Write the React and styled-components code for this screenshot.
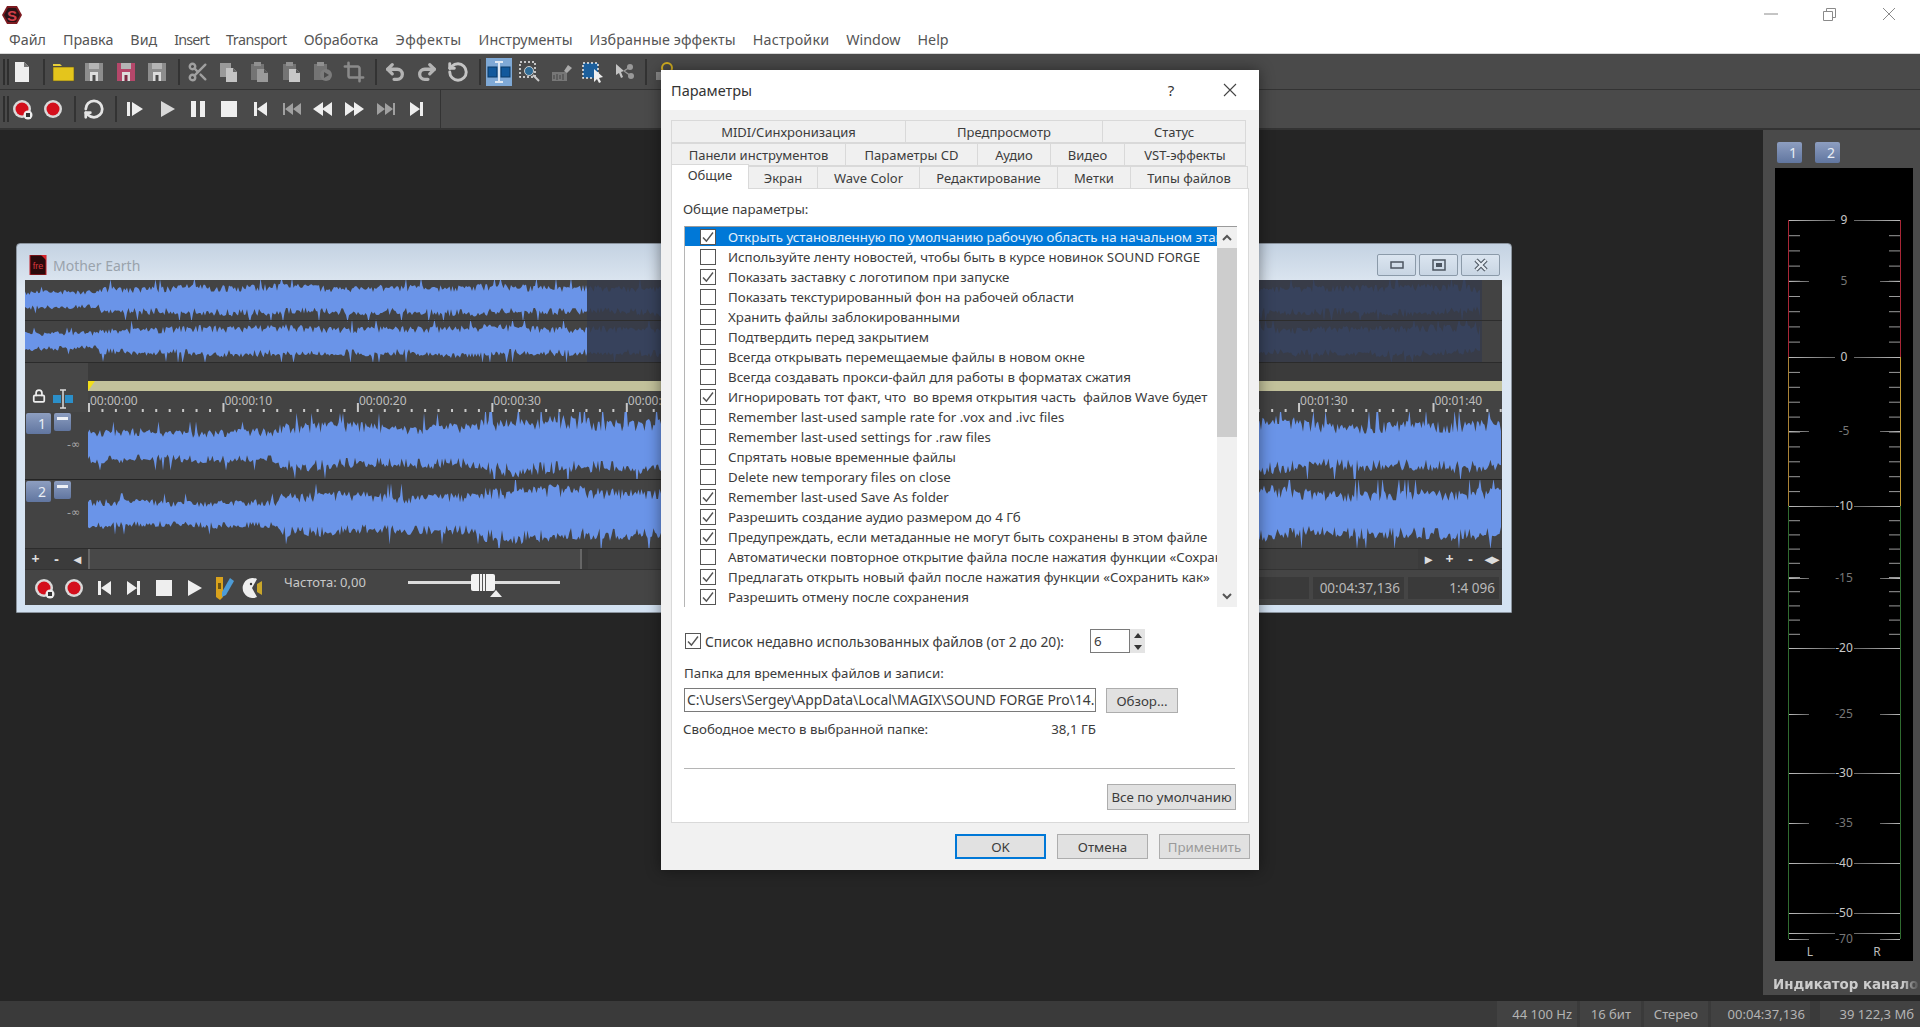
import React from 'react';
import styled, { createGlobalStyle } from 'styled-components';
import { Scissors, Crop, Undo2, Redo2, RotateCcw, Lock } from 'lucide-react';

const UI_FONT = '"Noto Sans", "Open Sans", Arial, sans-serif';

const GlobalStyle = createGlobalStyle`
  html, body {
    margin: 0;
    padding: 0;
    background: #252525;
    overflow: hidden;
  }
  * {
    box-sizing: border-box;
  }
`;

const Page = styled.div`
  position: relative;
  width: 1920px;
  height: 1027px;
  display: flex;
  flex-direction: column;
  overflow: hidden;
  font-family: ${UI_FONT};
`;

/* top chrome */

const TopStrip = styled.div`
  height: 54px;
  background: #fff;
  display: flex;
  flex-direction: column;
  border-bottom: 1px solid #d8d8d8;
`;

const TitleRow = styled.div`
  height: 28px;
  display: flex;
  justify-content: space-between;
  padding: 5px 2px 0 2px;
`;

const WinButtons = styled.div`
  display: flex;
`;

const WinButton = styled.div`
  width: 59px;
  height: 18px;
  display: flex;
  justify-content: center;
  align-items: center;
  color: #8a8a8a;
`;

const MenuBar = styled.div`
  display: flex;
  padding-left: 9px;
  gap: 17px;
`;

const MenuItem = styled.span`
  font-size: 14.3px;
  line-height: 24px;
  letter-spacing: ${p => p.$spacing}px;
  color: #555;
  white-space: nowrap;
`;

const Toolbars = styled.div`
  height: 76px;
  background: #4a4a4a;
  border-bottom: 2px solid #333;
`;

const ToolRow = styled.div`
  height: 36px;
  padding-left: 3px;
  display: flex;
  align-items: center;
  gap: 5.3px;
  border-bottom: 1px solid #333;
`;

const ToolRowShort = styled(ToolRow)`
  height: 38px;
  width: 441px;
  border-right: 1px solid #333;
  border-bottom: none;
`;

const Grip = styled.div`
  width: 6px;
  height: 26px;
  margin-right: -5.3px;
  border-left: 2px solid #2e2e2e;
  border-right: 2px solid #2e2e2e;
`;

const Slot = styled.div`
  width: 26px;
  height: 28px;
  flex: none;
  display: flex;
  align-items: center;
  justify-content: center;
  color: ${p => p.$color || '#eee'};
  background: ${p => (p.$active ? '#7fa9d6' : 'transparent')};
`;

const ToolSep = styled.div`
  width: 2px;
  height: 26px;
  margin-left: 2.4px;
  background: #333;
`;

/* main area */

const Main = styled.div`
  flex: 1;
  display: flex;
  min-height: 0;
`;

const Workspace = styled.div`
  flex: 1;
  position: relative;
  background: #252525;
`;

const SoundWindow = styled.div`
  position: absolute;
  left: 16px;
  top: 113px;
  width: 1496px;
  height: 370px;
  padding: 0 9px 7px 8px;
  border: 1px solid #8b949e;
  border-radius: 4px 4px 0 0;
  background: linear-gradient(180deg, #c4d2e2 0%, #dfe8f2 12%, #d3e2f2 100%);
  display: flex;
  flex-direction: column;
`;

const SoundTitle = styled.div`
  height: 36px;
  display: flex;
  align-items: center;
  padding: 6px 2px 0 4px;
  gap: 3px;
`;

const SoundName = styled.span`
  margin-left: 3px;
  font-size: 14px;
  color: #9aa3ac;
  flex: 1;
`;

const FrameButton = styled.div`
  width: 39px;
  height: 22px;
  border: 1px solid #8b9aa9;
  border-radius: 2px;
  background: linear-gradient(180deg, #dbe5f0, #c8d5e3);
  display: flex;
  align-items: center;
  justify-content: center;
  color: #4c5560;
`;

const SoundInner = styled.div`
  flex: 1;
  display: flex;
  flex-direction: column;
  background: #434343;
`;

const Overview = styled.svg`
  display: block;
  flex: none;
  border-bottom: 1px solid #2b2b2b;
`;

const TimelineRow = styled.div`
  height: 49px;
  display: flex;
`;

const TimelineHead = styled.div`
  width: 63px;
  flex: none;
  background: #474747;
  padding: 26px 0 0 7px;
  display: flex;
  align-items: flex-start;
  gap: 6px;
  color: #eee;
`;

const TimelineBody = styled.div`
  flex: 1;
  display: flex;
  flex-direction: column;
`;

const TopGap = styled.div`
  height: 18px;
  background: #3b3b3b;
`;

const LoopBar = styled.div`
  position: relative;
  height: 10px;
  background: #c2c19b;
`;

const LoopFlag = styled.div`
  position: absolute;
  left: 0;
  top: 0;
  border-top: 10px solid #f2de1c;
  border-right: 7px solid transparent;
`;

const TrackRow = styled.div`
  height: ${p => p.$h}px;
  display: flex;
  background: #434343;
  border-top: ${p => (p.$line ? '1px solid #242424' : 'none')};
`;

const TrackHead = styled.div`
  width: 63px;
  flex: none;
  display: flex;
  flex-direction: column;
  padding: 1px 0 0 1px;
`;

const TrackButtons = styled.div`
  display: flex;
  gap: 3px;
`;

const ChannelButton = styled.div`
  width: 25px;
  height: 21px;
  border-radius: 2px;
  background: linear-gradient(180deg, #8d9ec0, #6176a0);
  color: #e8edf5;
  font-size: 14px;
  display: flex;
  align-items: center;
  justify-content: flex-end;
  padding-right: 5px;
`;

const MinusButton = styled(ChannelButton)`
  width: 17px;
  height: 18px;
  padding: 4px 0 0;
  justify-content: center;
  align-items: flex-start;
`;

const MinusBar = styled.div`
  width: 11px;
  height: 3px;
  background: #eef1f6;
`;

const DbLabel = styled.div`
  margin: 4px 0 0 41px;
  font-family: "DejaVu Sans", sans-serif;
  font-size: 11px;
  line-height: 14px;
  color: #aaa;
`;

const ScrollRow = styled.div`
  height: 21px;
  display: flex;
  align-items: center;
  background: #3b3b3b;
  border-top: 1px solid #2c2c2c;
  color: #ddd;
`;

const ScrollButton = styled.div`
  width: 21px;
  height: 20px;
  flex: none;
  display: flex;
  align-items: center;
  justify-content: center;
  font-size: 14px;
  font-weight: 700;
  line-height: 1;
`;

const ScrollThumb = styled.div`
  width: 494px;
  height: 20px;
  flex: none;
  margin-right: 6px;
  background: #484848;
  border-left: 2px solid #666;
  border-right: 2px solid #666;
`;

const ScrollTrack = styled.div`
  flex: 1;
  height: 20px;
  background: #3f3f3f;
`;

const TransportRow = styled.div`
  flex: 1;
  display: flex;
  align-items: center;
  gap: 4px;
  padding-left: 6px;
  padding-right: 3px;
  background: #454545;
  border-top: 1px solid #333;
`;

const RateLabel = styled.div`
  margin: -11px 0 0 13px;
  width: 120px;
  font-size: 13px;
  color: #c8c8c8;
  white-space: nowrap;
`;

const Slider = styled.div`
  position: relative;
  width: 152px;
  height: 3px;
  margin-top: -10px;
  background: #dcdcdc;
`;

const SliderThumb = styled.div`
  position: absolute;
  left: 63px;
  top: -7px;
  width: 24px;
  height: 17px;
  border-radius: 2px;
  background: linear-gradient(
    90deg,
    #f3f3f3 8px,
    #555 8px 9px,
    #f3f3f3 9px 11px,
    #555 11px 12px,
    #f3f3f3 12px 14px,
    #555 14px 15px,
    #f3f3f3 15px
  );
`;

const SliderMark = styled.div`
  position: absolute;
  left: 82px;
  top: 9px;
  border-left: 6px solid transparent;
  border-right: 6px solid transparent;
  border-bottom: 7px solid #eee;
`;

const Spacer = styled.div`
  flex: 1;
`;

const ReadoutCell = styled.div`
  width: ${p => p.$w}px;
  height: 22px;
  padding: 0 4px;
  background: #3a3a3a;
  font-size: 13.5px;
  line-height: 22px;
  color: #b8b8b8;
  text-align: right;
  white-space: nowrap;
`;

/* level meter */

const MeterPanel = styled.div`
  width: 157px;
  flex: none;
  margin-bottom: 6px;
  background: #4a4a4a;
  padding: 12px 0 0 12px;
  display: flex;
  flex-direction: column;
  overflow: hidden;
`;

const MeterButtons = styled.div`
  display: flex;
  gap: 13px;
  padding-left: 2px;
  margin-bottom: 5px;
`;

const MeterSvg = styled.svg`
  display: block;
  background: #000;
`;

const MeterTitle = styled.div`
  margin: 16px 0 0 -2px;
  font-family: "DejaVu Sans", sans-serif;
  font-size: 13.4px;
  font-weight: 700;
  color: #ccc;
  white-space: nowrap;
  mask-image: linear-gradient(90deg, #000 88%, transparent 100%);
`;

const StatusBar = styled.div`
  height: 26px;
  background: #3a3a3a;
  display: flex;
  justify-content: flex-end;
  gap: 3px;
`;

const StatusCell = styled.div`
  width: ${p => p.$w}px;
  margin-left: ${p => p.$ml || 0}px;
  padding-right: ${p => p.$pr || 5}px;
  background: #424242;
  font-size: 13px;
  line-height: 26px;
  color: #b4b4b4;
  text-align: right;
  white-space: nowrap;
`;

/* options dialog */

const Dialog = styled.div`
  position: absolute;
  left: 661px;
  top: 70px;
  width: 598px;
  height: 800px;
  background: #f1f1f1;
  box-shadow: 0 0 14px rgba(0, 0, 0, 0.45);
  display: flex;
  flex-direction: column;
  color: #3c3c3c;
  font-size: 13.3px;
`;

const DialogTitle = styled.div`
  height: 40px;
  flex: none;
  background: #fff;
  display: flex;
  align-items: center;
  padding-left: 10px;
  font-size: 14.5px;
  color: #333;
`;

const TitleText = styled.span`
  flex: 1;
`;

const DialogIcon = styled.div`
  width: ${p => p.$w}px;
  display: flex;
  justify-content: center;
  font-size: 15px;
`;

const TabStack = styled.div`
  margin: 10px 10px 0;
  flex: none;
`;

const TabRow = styled.div`
  display: flex;
  height: 23px;
`;

const Tab = styled.div`
  width: ${p => p.$w}px;
  height: ${p => (p.$active ? 25 : 23)}px;
  margin-top: ${p => (p.$active ? -2 : 0)}px;
  padding-top: ${p => (p.$active ? 1 : 2)}px;
  flex: none;
  position: relative;
  z-index: ${p => (p.$active ? 2 : 1)};
  background: ${p => (p.$active ? '#fff' : '#f0f0f0')};
  border: 1px solid #d9d9d9;
  border-bottom: ${p => (p.$active ? 'none' : '1px solid #d9d9d9')};
  border-left-width: ${p => (p.$first ? 1 : 0)}px;
  text-align: center;
  font-size: 13px;
  line-height: 18px;
  white-space: nowrap;
`;

const TabPanel = styled.div`
  margin: -1px 10px 0;
  height: 635px;
  flex: none;
  background: #fff;
  border: 1px solid #d9d9d9;
  padding: 11px 11px 0 11px;
  display: flex;
  flex-direction: column;
`;

const GroupLabel = styled.div`
  line-height: 18px;
`;

const OptionBox = styled.div`
  margin: 8px 0 0 1px;
  width: 553px;
  height: 381px;
  flex: none;
  display: flex;
  border-top: 1px solid #9a9a9a;
  border-left: 1px solid #b5b5b5;
  overflow: hidden;
`;

const OptionList = styled.div`
  flex: 1;
  min-width: 0;
  overflow: hidden;
`;

const OptionRow = styled.div`
  height: 20px;
  display: flex;
  align-items: center;
  gap: 12px;
  padding-left: 15px;
  white-space: pre;
  overflow: hidden;
  color: ${p => (p.$selected ? '#e4effa' : 'inherit')};
  background: ${p => (p.$selected ? 'linear-gradient(180deg, #0078d7 19px, #fff 19px)' : 'none')};
`;

const CheckFrame = styled.div`
  width: 16px;
  height: 16px;
  flex: none;
  background: #fff;
  border: 1px solid #555;
  color: #444;
  display: flex;
  align-items: center;
  justify-content: center;
`;

const ScrollBar = styled.div`
  width: 20px;
  flex: none;
  background: #f0f0f0;
  display: flex;
  flex-direction: column;
`;

const ScrollArrow = styled.div`
  height: 21px;
  flex: none;
  display: flex;
  align-items: center;
  justify-content: center;
  color: #555;
`;

const VThumb = styled.div`
  height: 189px;
  flex: none;
  background: #cdcdcd;
`;

const RecentRow = styled.div`
  margin-top: 22px;
  padding-left: 2px;
  height: 24px;
  display: flex;
  align-items: center;
  gap: 4px;
`;

const RecentText = styled.span`
  width: 381px;
  font-size: 13.8px;
  white-space: nowrap;
`;

const SpinInput = styled.div`
  width: 40px;
  height: 24px;
  border: 1px solid #7a7a7a;
  padding-left: 3px;
  line-height: 22px;
`;

const SpinButtons = styled.div`
  width: 15px;
  height: 24px;
  background: #e4e4e4;
  margin-left: -4px;
  display: flex;
  flex-direction: column;
  align-items: center;
  justify-content: space-around;
  color: #333;
`;

const FieldLabel = styled.div`
  margin-top: 11px;
  padding-left: 1px;
  line-height: 18px;
`;

const PathRow = styled.div`
  margin-top: 6px;
  display: flex;
  gap: 10px;
  padding-left: 1px;
`;

const PathInput = styled.div`
  width: 412px;
  height: 24px;
  border: 1px solid #7a7a7a;
  padding: 0 2px;
  font-size: 13.9px;
  line-height: 22px;
  overflow: hidden;
  white-space: nowrap;
`;

const PushButton = styled.div`
  width: ${p => p.$w}px;
  height: ${p => p.$h || 25}px;
  flex: none;
  background: #e1e1e1;
  border: ${p => (p.$focus ? '2px solid #0078d7' : '1px solid #adadad')};
  color: ${p => (p.$disabled ? '#9a9a9a' : 'inherit')};
  display: flex;
  align-items: center;
  justify-content: center;
  white-space: nowrap;
`;

const FreeRow = styled.div`
  width: 413px;
  margin-top: 7px;
  display: flex;
  justify-content: space-between;
  line-height: 18px;
`;

const PanelRule = styled.div`
  margin: 30px 0 0 1px;
  width: 551px;
  height: 1px;
  background: #b5b5b5;
`;

const DefaultsRow = styled.div`
  margin-top: 15px;
  width: 553px;
  display: flex;
  justify-content: flex-end;
`;

const DialogFooter = styled.div`
  flex: 1;
  display: flex;
  justify-content: flex-end;
  gap: 11px;
  padding: 11px 9px 0 0;
`;

/* waveform data */

const makeRng = seed => {
  let s = seed;
  return () => {
    s = (s * 1664525 + 1013904223) % 4294967296;
    return s / 4294967296;
  };
};

const edge = (rng, x) => {
  const pick = rng();
  const slow = 0.9 + 0.1 * Math.sin(x / 23) * Math.sin(x / 61);
  if (pick < 0.14) return 0.52 * slow;
  if (pick > 0.96) return 1.22;
  return (0.66 + rng() * 0.3) * slow;
};

const wavePath = (width, center, ampAt, seed) => {
  const rng = makeRng(seed);
  const top = [];
  const bottom = [];
  for (let x = 0; x <= width; x += 1.5) {
    const amp = ampAt(x);
    top.push(`${x} ${(center - amp * edge(rng, x)).toFixed(1)}`);
    bottom.unshift(`${x} ${(center + amp * edge(rng, x + 40)).toFixed(1)}`);
  }
  return `M${top.join('L')}L${bottom.join('L')}Z`;
};

// x here is counted from the left edge of the track area
const ampTrack1 = x => (x < 192 ? 20 : x < 392 ? 27 : x < 1210 ? 33 : 29);
const ampTrack2 = x => (x < 192 ? 17 : x < 392 ? 25 : x < 1210 ? 32 : 29);

const ampOverview = x => {
  if (x < 75) return 11;
  if (x < 153) return 17;
  if (x < 1447) return 18;
  return Math.max(0, 18 - (x - 1447) * 0.6);
};

const OVERVIEW_SELECTED = 562;

const track1Path = wavePath(1414, 34, ampTrack1, 11);
const track2Path = wavePath(1414, 34, ampTrack2, 23);
const overview1 = wavePath(1456, 20, ampOverview, 37);
const overview2 = wavePath(1456, 61, ampOverview, 51);

/* icons */

const Doc = () => (
  <svg width="22" height="24" viewBox="0 0 22 24">
    <path d="M4 2h9l5 5v15H4z" fill="#eee" />
    <path d="M13 2v5h5z" fill="#777" />
  </svg>
);

const Folder = () => (
  <svg width="24" height="22" viewBox="0 0 24 22">
    <path d="M2 3h7l2 2h-9z" fill="#e8cf3a" />
    <rect x="2" y="6" width="21" height="14" fill="#e4c51c" stroke="#5d5120" strokeWidth="0.6" />
  </svg>
);

const Floppy = ({ fill = '#8d8d8d', dark = '#4a4a4a' }) => (
  <svg width="22" height="22" viewBox="0 0 22 22">
    <rect x="2" y="2" width="18" height="18" fill={fill} />
    <rect x="6" y="2" width="10" height="6" fill="#b4b4b4" />
    <rect x="7" y="11" width="8" height="9" fill="#ddd" />
    <rect x="9.5" y="14" width="3" height="6" fill={dark} />
  </svg>
);

const Pages = () => (
  <svg width="24" height="24" viewBox="0 0 24 24">
    <rect x="3" y="3" width="11" height="14" fill="#9a9a9a" />
    <path d="M9 8h7l4 4v10H9z" fill="#c4c4c4" />
    <path d="M16 8v4h4z" fill="#666" />
  </svg>
);

const Clipboard = ({ mark }) => (
  <svg width="24" height="24" viewBox="0 0 24 24">
    <rect x="3" y="4" width="13" height="16" fill="#747474" />
    <rect x="6" y="2" width="7" height="4" fill="#909090" />
    {mark === 'play' ? (
      <>
        <circle cx="15" cy="15" r="6" fill="#7c7c7c" />
        <path d="M13 12l5 3-5 3z" fill="#4a4a4a" />
      </>
    ) : (
      <>
        <path d="M9 9h7l4 4v9H9z" fill={mark === 'bright' ? '#c8c8c8' : '#9a9a9a'} />
        <path d="M16 9v4h4z" fill="#555" />
      </>
    )}
  </svg>
);

const Record = ({ pause }) => (
  <svg width="24" height="24" viewBox="0 0 24 24">
    <circle cx="12" cy="12" r="9" fill="#d9d9d9" />
    <circle cx="12" cy="12" r="6.5" fill="#d40f1c" />
    {pause && <circle cx="18" cy="18" r="4.5" fill="#eee" />}
    {pause && <rect x="16" y="16" width="4" height="4" fill="#333" />}
  </svg>
);

const Shape = ({ d, fill = '#eee' }) => (
  <svg width="24" height="24" viewBox="0 0 24 24">
    <path d={d} fill={fill} />
  </svg>
);

const PLAY_FROM = 'M4 5h3v14H4zM9 5l11 7-11 7z';
const PLAY = 'M6 4l14 8-14 8z';
const PAUSE = 'M5 4h5v16H5zM14 4h5v16h-5z';
const STOP = 'M4 4h16v16H4z';
const PREV = 'M6 5h3v14H6zM9 12l10-7v14z';
const NEXT = 'M15 5h3v14h-3zM15 12L5 5v14z';
const START = 'M3 6h2v12H3zM5 12l8-6v12zM13 12l8-6v12z';
const END = 'M19 6h2v12h-2zM19 12l-8-6v12zM11 12L3 6v12z';
const REW = 'M2 12l10-7v14zM11 12l10-7v14z';
const FWD = 'M22 12L12 5v14zM13 12L3 5v14z';

const SelectTool = () => (
  <svg width="24" height="24" viewBox="0 0 24 24">
    <rect x="1" y="7" width="9" height="10" fill="#12599c" stroke="#0b3a66" />
    <rect x="14" y="7" width="9" height="10" fill="#12599c" stroke="#0b3a66" />
    <path d="M8 2h8M12 2v20M8 22h8" stroke="#dfe8f2" strokeWidth="2" fill="none" />
  </svg>
);

const ZoomTool = () => (
  <svg width="24" height="24" viewBox="0 0 24 24">
    <rect x="2" y="2" width="15" height="15" fill="none" stroke="#eee" strokeWidth="1.5" strokeDasharray="2 2" />
    <circle cx="11" cy="11" r="4.5" fill="#2f6b95" stroke="#ccc" />
    <path d="M15 15l6 6" stroke="#ccc" strokeWidth="2" />
  </svg>
);

const EnvTool = () => (
  <svg width="24" height="24" viewBox="0 0 24 24">
    <rect x="2" y="12" width="15" height="9" fill="#777" />
    <path d="M4 15v4M7 14v6M10 15v4M13 14v6" stroke="#444" />
    <path d="M14 11l4-6 4 3-5 5z" fill="#aaa" />
  </svg>
);

const RegionTool = () => (
  <svg width="24" height="24" viewBox="0 0 24 24">
    <rect x="2" y="3" width="15" height="15" fill="#1c5f9c" stroke="#eee" strokeWidth="1.5" strokeDasharray="2 2" />
    <path d="M13 9l9 8-4 1 2 4-2 1-2-4-3 3z" fill="#eee" />
  </svg>
);

const NodesTool = () => (
  <svg width="24" height="24" viewBox="0 0 24 24">
    <path d="M4 4l8 7-3 1 2 5-2 1-2-5-3 2z" fill="#c4c4c4" />
    <circle cx="18" cy="7" r="3" fill="#999" />
    <circle cx="19" cy="16" r="3" fill="#999" />
    <path d="M12 11l6-4M12 11l7 5" stroke="#999" strokeWidth="1.5" />
  </svg>
);

const PluginLock = () => (
  <svg width="22" height="24" viewBox="0 0 22 24">
    <rect x="2" y="12" width="7" height="8" fill="#888" />
    <circle cx="13" cy="8" r="5" fill="none" stroke="#d4b021" strokeWidth="2" />
  </svg>
);

const Pencils = () => (
  <svg width="26" height="26" viewBox="0 0 26 26">
    <path d="M5 2h7v20l-3 3-4-3z" fill="#d9a21c" />
    <path d="M7 8h3v6H7z" fill="#6f5410" />
    <path d="M19 3l4 3-8 14-4 2 0-5z" fill="#4d9bd6" />
  </svg>
);

const Scrub = () => (
  <svg width="24" height="24" viewBox="0 0 24 24">
    <path d="M15 3a10 10 0 1 0 0 18l-5-9z" fill="#eee" />
    <circle cx="9" cy="8" r="1.2" fill="#333" />
    <path d="M15 8l5-3v14l-5-3z" fill="#c9a62a" />
  </svg>
);

const AppLogo = () => (
  <svg width="20" height="20" viewBox="0 0 20 20">
    <path d="M5 1h10l5 9-5 9H5L0 10z" fill="#7d1a20" />
    <path d="M6 3h8l4 7-4 7H6l-4-7z" fill="#2a1216" />
    <text x="10" y="15.5" textAnchor="middle" fontSize="15" fontWeight="700" fontFamily="Liberation Sans, sans-serif" fill="#d0404a">S</text>
  </svg>
);

const FileBadge = () => (
  <svg width="18" height="20" viewBox="0 0 18 20">
    <rect x="1" y="0" width="16" height="20" fill="#2a0a0c" stroke="#c01c24" />
    <path d="M12 0h5v5z" fill="#d8252c" />
    <text x="9" y="14" textAnchor="middle" fontSize="9" fontFamily="Liberation Sans, sans-serif" fill="#d8383e">fre</text>
  </svg>
);

const Tick = ({ size = 14 }) => (
  <svg width={size} height={size} viewBox="0 0 14 14">
    <path d="M2 7.5l3.4 3.6L12 2.5" fill="none" stroke="#555" strokeWidth="1.4" />
  </svg>
);

const Chevron = ({ up }) => (
  <svg width="10" height="7" viewBox="0 0 10 7">
    <path d={up ? 'M1 6l4-4 4 4' : 'M1 1l4 4 4-4'} fill="none" stroke="#555" strokeWidth="2" />
  </svg>
);

const SmallX = () => (
  <svg width="14" height="14" viewBox="0 0 14 14">
    <path d="M1 1l12 12M13 1L1 13" stroke="#444" strokeWidth="1.1" />
  </svg>
);

/* page content */

// second value is the letter spacing that brings each word to its width in the reference
const MENU = [
  ['Файл', 0],
  ['Правка', 0],
  ['Вид', 0],
  ['Insert', -0.8],
  ['Transport', -0.5],
  ['Обработка', 0],
  ['Эффекты', 0.4],
  ['Инструменты', 0],
  ['Избранные эффекты', 0.12],
  ['Настройки', 0.2],
  ['Window', 0],
  ['Help', 0]
];

const DIALOG_TABS = [
  [
    ['MIDI/Синхронизация', 235],
    ['Предпросмотр', 197],
    ['Статус', 143]
  ],
  [
    ['Панели инструментов', 175],
    ['Параметры CD', 132],
    ['Аудио', 73],
    ['Видео', 74],
    ['VST-эффекты', 121]
  ],
  [
    ['Общие', 78, true],
    ['Экран', 69],
    ['Wave Color', 102],
    ['Редактирование', 138],
    ['Метки', 73],
    ['Типы файлов', 117]
  ]
];

const OPTIONS = [
  ['Открыть установленную по умолчанию рабочую область на начальном этапе', true],
  ['Используйте ленту новостей, чтобы быть в курсе новинок SOUND FORGE', false],
  ['Показать заставку с логотипом при запуске', true],
  ['Показать текстурированный фон на рабочей области', false],
  ['Хранить файлы заблокированными', false],
  ['Подтвердить перед закрытием', false],
  ['Всегда открывать перемещаемые файлы в новом окне', false],
  ['Всегда создавать прокси-файл для работы в форматах сжатия', false],
  ['Игнорировать тот факт, что  во время открытия часть  файлов Wave будет', true],
  ['Remember last-used sample rate for .vox and .ivc files', false],
  ['Remember last-used settings for .raw files', false],
  ['Спрятать новые временные файлы', false],
  ['Delete new temporary files on close', false],
  ['Remember last-used Save As folder', true],
  ['Разрешить создание аудио размером до 4 Гб', true],
  ['Предупреждать, если метаданные не могут быть сохранены в этом файле', true],
  ['Автоматически повторное открытие файла после нажатия функции «Сохранить', false],
  ['Предлагать открыть новый файл после нажатия функции «Сохранить как»', true],
  ['Разрешить отмену после сохранения', true],
  ['', false]
];

// labels under the options dialog are left out
const RULER_LABELS = [
  [0, '00:00:00'],
  [1, '00:00:10'],
  [2, '00:00:20'],
  [3, '00:00:30'],
  [4, '00:00:40'],
  [9, '00:01:30'],
  [10, '00:01:40']
];

const Ruler = () => {
  const step = 134.45;
  const ticks = [];
  for (let i = 0; i * (step / 10) < 1414; i++) {
    const major = i % 10 === 0;
    ticks.push(
      <rect key={i} x={i * (step / 10)} y={major ? 12 : 18} width="2" height={major ? 9 : 4} fill="#c8c8c8" />
    );
  }
  return (
    <svg width="1414" height="21" style={{ display: 'block' }}>
      {ticks}
      {RULER_LABELS.map(([n, t]) => (
        <text key={t} x={n * step + 2} y="14" fontSize="12" fontFamily="Noto Sans, sans-serif" fill="#bdbdbd">
          {t}
        </text>
      ))}
    </svg>
  );
};

// y values are measured from the top of the black meter area
const METER_MARKS = [
  { label: '9', y: 52, long: true, bright: true },
  { label: '5', y: 113 },
  { label: '0', y: 189, long: true, bright: true },
  { label: '-5', y: 263 },
  { label: '-10', y: 338, long: true, bright: true },
  { label: '-15', y: 410 },
  { label: '-20', y: 480, long: true, bright: true },
  { label: '-25', y: 546 },
  { label: '-30', y: 605, long: true, bright: true },
  { label: '-35', y: 655 },
  { label: '-40', y: 695, long: true, bright: true },
  { label: '-50', y: 745, long: true, bright: true },
  { label: '', y: 765, long: true, bright: true },
  { label: '-70', y: 771 }
];

const LevelMeter = () => {
  const minor = [];
  for (let i = 0; i < 9; i++) minor.push(52 + i * 15.2);
  for (let i = 0; i < 10; i++) minor.push(189 + i * 14.9);
  for (let i = 0; i < 10; i++) minor.push(338 + i * 14.2);
  return (
    <MeterSvg width="138" height="793">
      <defs>
        <linearGradient id="fadeL">
          <stop offset="0" stopColor="#bbb" />
          <stop offset="1" stopColor="#666" />
        </linearGradient>
        <linearGradient id="fadeR">
          <stop offset="0" stopColor="#666" />
          <stop offset="1" stopColor="#bbb" />
        </linearGradient>
      </defs>
      <rect x="13" y="52" width="1" height="137" fill="#a82636" />
      <rect x="125" y="52" width="1" height="137" fill="#a82636" />
      <rect x="13" y="189" width="1" height="149" fill="#a98236" />
      <rect x="125" y="189" width="1" height="149" fill="#c49c34" />
      <rect x="13" y="338" width="1" height="433" fill="#2f6a2f" />
      <rect x="125" y="338" width="1" height="433" fill="#2f6a2f" />
      {minor.map(y => (
        <g key={y}>
          <rect x="14" y={y} width="11" height="1" fill="#999" />
          <rect x="114" y={y} width="11" height="1" fill="#999" />
        </g>
      ))}
      {METER_MARKS.map(m => (
        <g key={m.y}>
          <rect x="14" y={m.y} width={m.long ? 46 : 20} height="1" fill="url(#fadeL)" />
          <rect x={m.long ? 79 : 105} y={m.y} width={m.long ? 46 : 20} height="1" fill="url(#fadeR)" />
          <text x="69" y={m.y + 4} textAnchor="middle" fontSize="12" fontFamily="Noto Sans, sans-serif" fill={m.bright ? '#c8c8c8' : '#777'}>
            {m.label}
          </text>
        </g>
      ))}
      <text x="35" y="788" textAnchor="middle" fontSize="12" fontFamily="Noto Sans, sans-serif" fill="#bbb">L</text>
      <text x="102" y="788" textAnchor="middle" fontSize="12" fontFamily="Noto Sans, sans-serif" fill="#bbb">R</text>
    </MeterSvg>
  );
};

const App = () => (
  <Page>
    <GlobalStyle />

    <TopStrip>
      <TitleRow>
        <AppLogo />
        <WinButtons>
          <WinButton>
            <svg width="14" height="14"><path d="M0 7h14" stroke="currentColor" /></svg>
          </WinButton>
          <WinButton>
            <svg width="13" height="13"><path d="M.5 3.5h9v9h-9zM3.5 3V.5h9v9H10" fill="none" stroke="currentColor" /></svg>
          </WinButton>
          <WinButton>
            <svg width="14" height="14"><path d="M1 1l12 12M13 1L1 13" stroke="currentColor" /></svg>
          </WinButton>
        </WinButtons>
      </TitleRow>
      <MenuBar>
        {MENU.map(([name, spacing]) => (
          <MenuItem key={name} $spacing={spacing}>{name}</MenuItem>
        ))}
      </MenuBar>
    </TopStrip>

    <Toolbars>
      <ToolRow>
        <Grip />
        <Slot><Doc /></Slot>
        <ToolSep />
        <Slot><Folder /></Slot>
        <Slot><Floppy /></Slot>
        <Slot><Floppy fill="#b5476a" dark="#7d2a44" /></Slot>
        <Slot><Floppy /></Slot>
        <ToolSep />
        <Slot $color="#a0a0a0"><Scissors size={22} strokeWidth={2.6} /></Slot>
        <Slot><Pages /></Slot>
        <Slot><Clipboard mark="dim" /></Slot>
        <Slot><Clipboard mark="bright" /></Slot>
        <Slot><Clipboard mark="play" /></Slot>
        <Slot $color="#8a8a8a"><Crop size={22} strokeWidth={2.8} /></Slot>
        <ToolSep />
        <Slot $color="#b4b4b4"><Undo2 size={22} strokeWidth={3.6} /></Slot>
        <Slot $color="#b4b4b4"><Redo2 size={22} strokeWidth={3.6} /></Slot>
        <Slot $color="#c4c4c4"><RotateCcw size={22} strokeWidth={3.2} /></Slot>
        <ToolSep />
        <Slot $active><SelectTool /></Slot>
        <Slot><ZoomTool /></Slot>
        <Slot><EnvTool /></Slot>
        <Slot><RegionTool /></Slot>
        <Slot><NodesTool /></Slot>
        <ToolSep />
        <Slot><PluginLock /></Slot>
      </ToolRow>
      <ToolRowShort>
        <Grip />
        <Slot><Record pause /></Slot>
        <Slot><Record /></Slot>
        <ToolSep />
        <Slot $color="#e4e4e4"><RotateCcw size={22} strokeWidth={3} style={{ transform: 'scaleY(-1)' }} /></Slot>
        <ToolSep />
        <Slot><Shape d={PLAY_FROM} /></Slot>
        <Slot><Shape d={PLAY} fill="#d8d8d8" /></Slot>
        <Slot><Shape d={PAUSE} /></Slot>
        <Slot><Shape d={STOP} /></Slot>
        <Slot><Shape d={PREV} /></Slot>
        <Slot><Shape d={START} fill="#a0a0a0" /></Slot>
        <Slot><Shape d={REW} /></Slot>
        <Slot><Shape d={FWD} /></Slot>
        <Slot><Shape d={END} fill="#a0a0a0" /></Slot>
        <Slot><Shape d={NEXT} /></Slot>
      </ToolRowShort>
    </Toolbars>

    <Main>
      <Workspace>
        <SoundWindow>
          <SoundTitle>
            <FileBadge />
            <SoundName>Mother Earth</SoundName>
            <FrameButton>
              <svg width="14" height="8"><rect x="1" y="1" width="12" height="6" fill="none" stroke="currentColor" strokeWidth="1.5" /></svg>
            </FrameButton>
            <FrameButton>
              <svg width="14" height="12"><path d="M1 1h12v10H1z" fill="none" stroke="currentColor" strokeWidth="1.5" /><rect x="4" y="4" width="6" height="4" fill="currentColor" /></svg>
            </FrameButton>
            <FrameButton>
              <svg width="16" height="16">
                <path d="M3 3l10 10M13 3L3 13" stroke="currentColor" strokeWidth="4.5" />
                <path d="M3 3l10 10M13 3L3 13" stroke="#e4ebf3" strokeWidth="2.4" />
              </svg>
            </FrameButton>
          </SoundTitle>
          <SoundInner>
            <Overview width="1477" height="83">
              <clipPath id="ovSel"><rect x="0" y="0" width={OVERVIEW_SELECTED} height="83" /></clipPath>
              <clipPath id="ovRest"><rect x={OVERVIEW_SELECTED} y="0" width="915" height="83" /></clipPath>
              <rect x={OVERVIEW_SELECTED} y="0" width="895" height="82" fill="#383c48" />
              <g clipPath="url(#ovRest)" fill="#37425c">
                <path d={overview1} />
                <path d={overview2} />
              </g>
              <g clipPath="url(#ovSel)" fill="#6a94e8">
                <path d={overview1} />
                <path d={overview2} />
              </g>
              <rect x="0" y="40" width="1477" height="1" fill="#2d2d2d" />
            </Overview>

            <TimelineRow>
              <TimelineHead>
                <Lock size={14} strokeWidth={3} />
                <svg width="22" height="20" viewBox="0 0 22 20">
                  <rect x="1" y="6" width="8" height="8" fill="#2b8fc9" />
                  <rect x="13" y="6" width="8" height="8" fill="#2b8fc9" />
                  <path d="M8 1h6M11 1v18M8 19h6" stroke="#ddd" strokeWidth="1.5" fill="none" />
                </svg>
              </TimelineHead>
              <TimelineBody>
                <TopGap />
                <LoopBar><LoopFlag /></LoopBar>
                <Ruler />
              </TimelineBody>
            </TimelineRow>

            <TrackRow $h={67}>
              <TrackHead>
                <TrackButtons>
                  <ChannelButton>1</ChannelButton>
                  <MinusButton><MinusBar /></MinusButton>
                </TrackButtons>
                <DbLabel>-∞</DbLabel>
              </TrackHead>
              <svg width="1414" height="67"><path d={track1Path} fill="#6a94e8" /></svg>
            </TrackRow>
            <TrackRow $h={69} $line>
              <TrackHead>
                <TrackButtons>
                  <ChannelButton>2</ChannelButton>
                  <MinusButton><MinusBar /></MinusButton>
                </TrackButtons>
                <DbLabel>-∞</DbLabel>
              </TrackHead>
              <svg width="1414" height="68"><path d={track2Path} fill="#6a94e8" /></svg>
            </TrackRow>

            <ScrollRow>
              <ScrollButton>+</ScrollButton>
              <ScrollButton>-</ScrollButton>
              <ScrollButton>◂</ScrollButton>
              <ScrollThumb />
              <ScrollTrack />
              <ScrollButton>▸</ScrollButton>
              <ScrollButton>+</ScrollButton>
              <ScrollButton>-</ScrollButton>
              <ScrollButton>◂▸</ScrollButton>
            </ScrollRow>

            <TransportRow>
              <Slot><Record pause /></Slot>
              <Slot><Record /></Slot>
              <Slot><Shape d={PREV} /></Slot>
              <Slot><Shape d={NEXT} /></Slot>
              <Slot><Shape d={STOP} /></Slot>
              <Slot><Shape d={PLAY} /></Slot>
              <Slot><Pencils /></Slot>
              <Slot><Scrub /></Slot>
              <RateLabel>Частота: 0,00</RateLabel>
              <Slider>
                <SliderThumb />
                <SliderMark />
              </Slider>
              <Spacer />
              <ReadoutCell $w={100} />
              <ReadoutCell $w={91}>00:04:37,136</ReadoutCell>
              <ReadoutCell $w={91}>1:4 096</ReadoutCell>
            </TransportRow>
          </SoundInner>
        </SoundWindow>
      </Workspace>

      <MeterPanel>
        <MeterButtons>
          <ChannelButton>1</ChannelButton>
          <ChannelButton>2</ChannelButton>
        </MeterButtons>
        <LevelMeter />
        <MeterTitle>Индикатор каналов</MeterTitle>
      </MeterPanel>
    </Main>

    <StatusBar>
      <StatusCell $w={80}>44 100 Hz</StatusCell>
      <StatusCell $w={61} $pr={10}>16 бит</StatusCell>
      <StatusCell $w={64} $pr={10}>Стерео</StatusCell>
      <StatusCell $w={99} $pr={5}>00:04:37,136</StatusCell>
      <StatusCell $w={100} $ml={7} $pr={6}>39 122,3 Мб</StatusCell>
    </StatusBar>

    <Dialog>
      <DialogTitle>
        <TitleText>Параметры</TitleText>
        <DialogIcon $w={88}>?</DialogIcon>
        <DialogIcon $w={29}><SmallX /></DialogIcon>
        <DialogIcon $w={15} />
      </DialogTitle>
      <TabStack>
        {DIALOG_TABS.map((row, r) => (
          <TabRow key={r}>
            {row.map(([name, w, active], i) => (
              <Tab key={name} $w={w} $active={active} $first={i === 0}>{name}</Tab>
            ))}
          </TabRow>
        ))}
      </TabStack>
      <TabPanel>
        <GroupLabel>Общие параметры:</GroupLabel>
        <OptionBox>
          <OptionList>
            {OPTIONS.map(([text, checked], i) => (
              <OptionRow key={i} $selected={i === 0}>
                <CheckFrame>{checked && <Tick />}</CheckFrame>
                <span>{text}</span>
              </OptionRow>
            ))}
          </OptionList>
          <ScrollBar>
            <ScrollArrow><Chevron up /></ScrollArrow>
            <VThumb />
            <Spacer />
            <ScrollArrow><Chevron /></ScrollArrow>
          </ScrollBar>
        </OptionBox>
        <RecentRow>
          <CheckFrame><Tick /></CheckFrame>
          <RecentText>Список недавно использованных файлов (от 2 до 20):</RecentText>
          <SpinInput>6</SpinInput>
          <SpinButtons>
            <svg width="8" height="5"><path d="M0 5l4-5 4 5z" fill="currentColor" /></svg>
            <svg width="8" height="5"><path d="M0 0l4 5 4-5z" fill="currentColor" /></svg>
          </SpinButtons>
        </RecentRow>
        <FieldLabel>Папка для временных файлов и записи:</FieldLabel>
        <PathRow>
          <PathInput>C:\Users\Sergey\AppData\Local\MAGIX\SOUND FORGE Pro\14.0</PathInput>
          <PushButton $w={72}>Обзор...</PushButton>
        </PathRow>
        <FreeRow>
          <span>Свободное место в выбранной папке:</span>
          <span>38,1 ГБ</span>
        </FreeRow>
        <PanelRule />
        <DefaultsRow>
          <PushButton $w={129} $h={26}>Все по умолчанию</PushButton>
        </DefaultsRow>
      </TabPanel>
      <DialogFooter>
        <PushButton $w={91} $h={25} $focus>OK</PushButton>
        <PushButton $w={91} $h={25}>Отмена</PushButton>
        <PushButton $w={91} $h={25} $disabled>Применить</PushButton>
      </DialogFooter>
    </Dialog>
  </Page>
);

export default App;
